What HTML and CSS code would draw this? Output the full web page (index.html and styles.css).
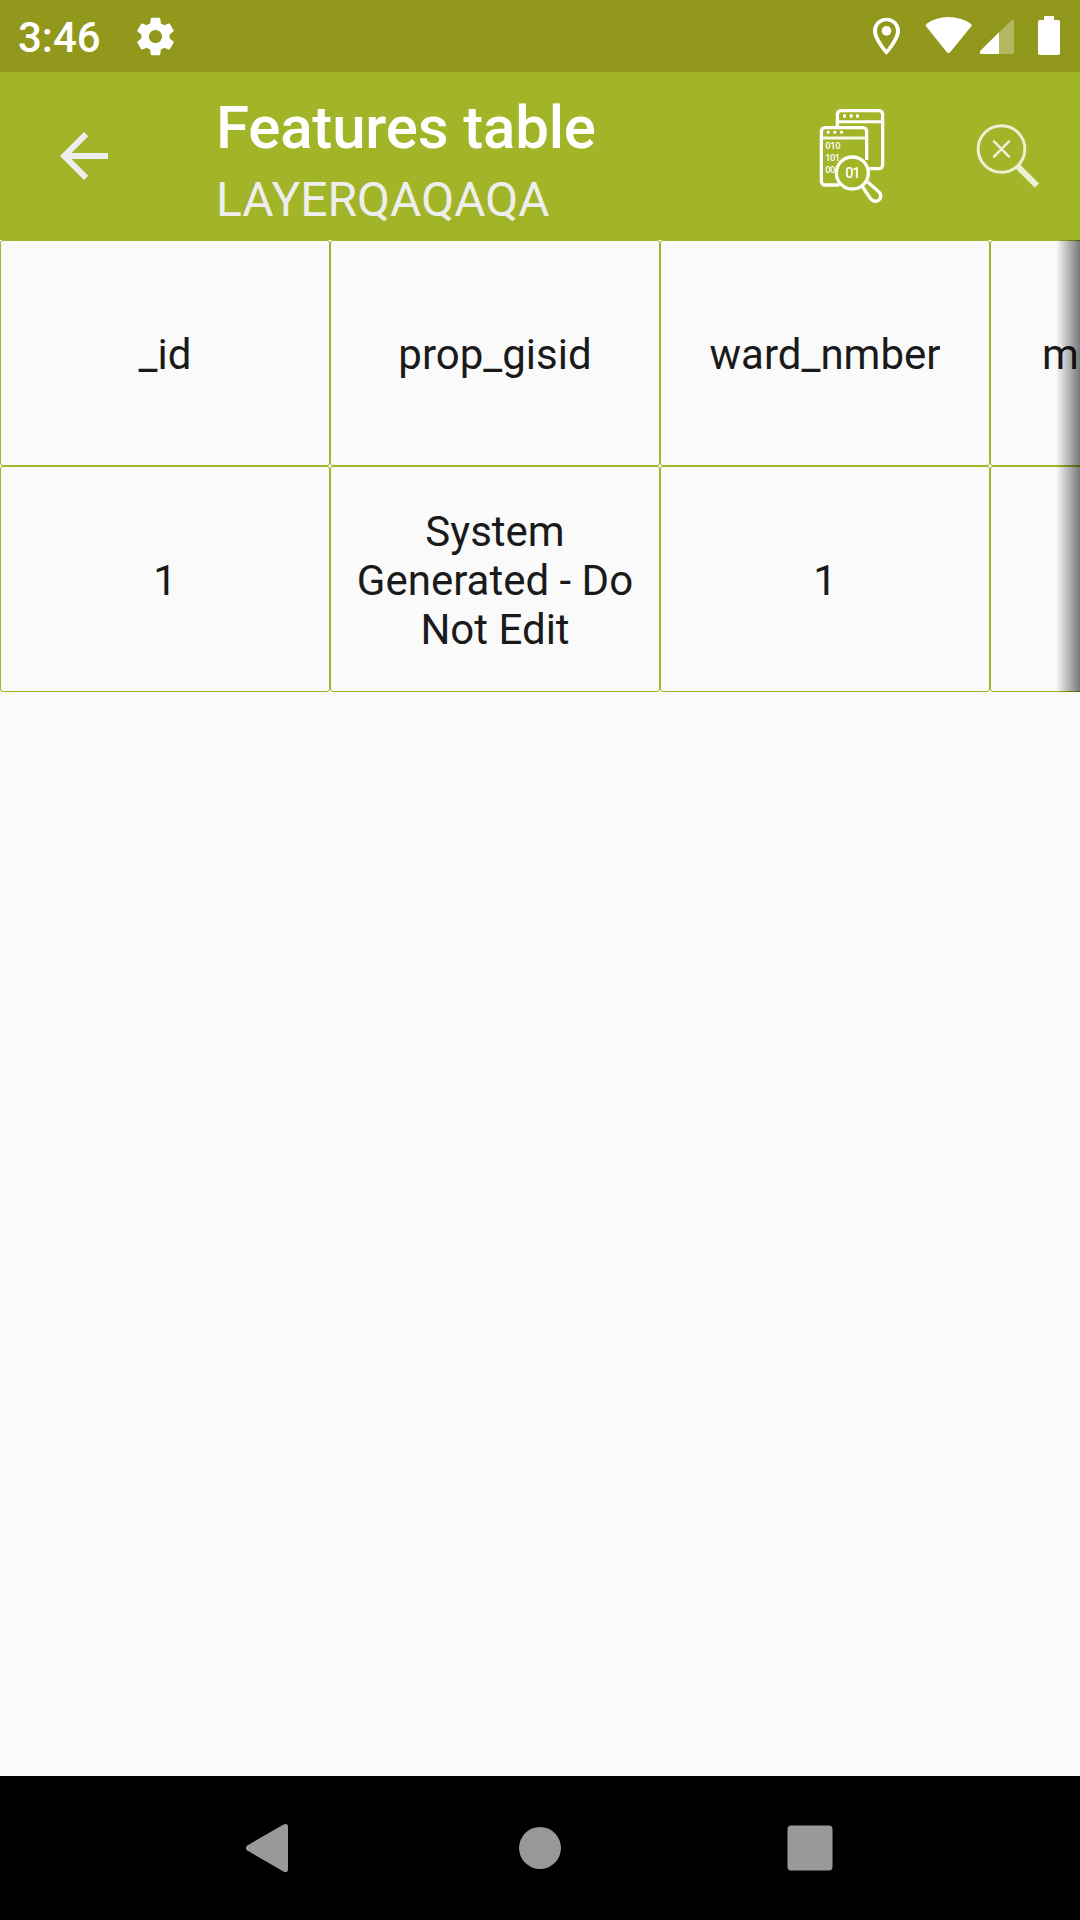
FILE: index.html
```html
<!DOCTYPE html>
<html lang="en">
<head>
<meta charset="utf-8">
<title>Features table</title>
<link rel="stylesheet" href="styles.css">
</head>
<body>
<div class="screen">
  <div class="status-bar">
    <span class="clock">3:46</span>
    <svg class="gear" width="45" height="45" viewBox="0 0 24 24"><path fill="#fff" d="M19.43 12.98c.04-.32.07-.64.07-.98s-.03-.66-.07-.98l2.11-1.65c.19-.15.24-.42.12-.64l-2-3.46c-.12-.22-.39-.3-.61-.22l-2.49 1c-.52-.4-1.08-.73-1.69-.98l-.38-2.65C14.46 2.18 14.25 2 14 2h-4c-.25 0-.46.18-.49.42l-.38 2.65c-.61.25-1.17.59-1.69.98l-2.49-1c-.23-.09-.49 0-.61.22l-2 3.46c-.13.22-.07.49.12.64l2.11 1.65c-.04.32-.07.65-.07.98s.03.66.07.98l-2.11 1.65c-.19.15-.24.42-.12.64l2 3.46c.12.22.39.3.61.22l2.49-1c.52.4 1.08.73 1.69.98l.38 2.65c.03.24.24.42.49.42h4c.25 0 .46-.18.49-.42l.38-2.65c.61-.25 1.17-.59 1.69-.98l2.49 1c.23.09.49 0 .61-.22l2-3.46c.12-.22.07-.49-.12-.64l-2.11-1.65zM12 15.5c-1.93 0-3.5-1.57-3.5-3.5s1.57-3.5 3.5-3.5 3.5 1.57 3.5 3.5-1.57 3.5-3.5 3.5z"/></svg>
    <div class="status-icons">
      <svg class="location" width="27" height="72" viewBox="99 0 81 216"><path fill="#fff" fill-rule="evenodd" d="M139.500 53C117 53 99 70 99 93C99 122 139.500 165 139.500 165S180 122 180 93C180 70 162 53 139.500 53ZM139.500 64C156 64 168 77 168 93C168 108 154 130 139.500 149C125 130 111 108 111 93C111 77 123 64 139.500 64Z"/><circle cx="139.500" cy="92.500" r="14.500" fill="#fff"/></svg>
      <svg class="wifi" width="47" height="72" viewBox="255 0 141 216"><path fill="#fff" d="M260 71Q289 51 325.500 51T392 71Q397 75 394 79L331 156Q325.500 162 320 156L258 79Q256 74 260 71Z"/></svg>
      <svg class="signal" width="36" height="72" viewBox="417 0 108 216"><path fill="#fff" fill-opacity=".3" d="M477 97L513 62Q522 55 522 64V156Q522 162 516 162H477Z"/><path fill="#fff" d="M477 97V162H424Q417 160 421 152Z"/></svg>
      <svg class="battery" width="24" height="72" viewBox="591 0 72 216"><path fill="#fff" d="M612 48H642V60H655Q660 60 660 66V159Q660 165 654 165H600Q594 165 594 159V66Q594 60 600 60H612Z"/></svg>
    </div>
  </div>

  <header class="toolbar">
    <svg class="back" width="72" height="72" viewBox="0 0 24 24"><path fill="#eee" d="M20 11H7.830l5.590-5.590L12 4l-8 8 8 8 1.410-1.410L7.830 13H20z"/></svg>
    <div class="titles">
      <h1 class="title">Features table</h1>
      <div class="subtitle">LAYERQAQAQA</div>
    </div>
    <div class="actions">
      <svg width="140" height="140" viewBox="0 0 420 420">
        <g fill="none" stroke="#fff" stroke-width="10" stroke-linejoin="round">
          <path d="M172 140V105Q172 92 185 92H295Q308 92 308 105V253Q308 266 295 266H268"/>
          <path d="M172 125H308" stroke-width="9"/>
          <path d="M178 315H137Q124 315 124 302V156Q124 143 137 143H247Q260 143 260 156V240"/>
          <path d="M124 174H260" stroke-width="9" stroke-opacity=".9"/>
          <circle cx="217" cy="279" r="48"/>
          <path d="M246 318L271 355Q281 368 294 362Q306 354 300 340Q298 336 263 306"/>
        </g>
        <g fill="#fff">
          <rect x="189" y="103" width="9" height="10" rx="3"/><rect x="209" y="103" width="9" height="10" rx="3"/><rect x="228" y="103" width="9" height="10" rx="3"/>
          <rect x="140" y="152" width="9" height="9" rx="3"/><rect x="160" y="152" width="9" height="9" rx="3"/><rect x="180" y="152" width="9" height="9" rx="3"/>
        </g>
        <g class="digits">
          <text x="136" y="208" textLength="46">010</text>
          <text x="136" y="243" textLength="44">101</text>
          <text x="136" y="278" textLength="30">00</text>
          <text class="digits-big" x="196" y="294" textLength="46">01</text>
        </g>
      </svg>
      <svg width="140" height="140" viewBox="0 0 420 420">
        <g fill="none" stroke="#ecf0d5">
          <circle cx="184.500" cy="207" r="70" stroke-width="9"/>
          <path d="M162 184L207 230M207 184L162 230" stroke-width="8" stroke-linecap="round"/>
          <path d="M233 259L291 317" stroke-width="18"/>
        </g>
      </svg>
    </div>
  </header>

  <main class="table-area">
    <div class="table">
      <div class="cell">_id</div>
      <div class="cell">prop_gisid</div>
      <div class="cell">ward_nmber</div>
      <div class="cell cell-cut">m</div>
      <div class="cell">1</div>
      <div class="cell">System Generated - Do Not Edit</div>
      <div class="cell">1</div>
      <div class="cell"></div>
    </div>
    <div class="edge-shadow"></div>
  </main>

  <nav class="nav-bar">
    <svg width="48" height="54" viewBox="0 0 48 54"><path fill="#999" d="M1.300 24.500L37.500 3.500Q42 1.500 42 6V48Q42 52.500 37.500 50.500L1.300 29.500Q-1.500 27 1.300 24.500Z"/></svg>
    <svg width="48" height="54" viewBox="0 0 48 54"><circle cx="24" cy="27" r="21" fill="#999"/></svg>
    <svg width="48" height="54" viewBox="0 0 48 54"><rect x="1.500" y="4.500" width="45" height="45" rx="3.500" fill="#999"/></svg>
  </nav>
</div>
</body>
</html>
```

FILE: styles.css
```css
* { box-sizing: border-box; }

body {
  margin: 0;
  font-family: Roboto, "Liberation Sans", sans-serif;
}

svg { display: block; flex: none; }

.screen {
  width: 1080px;
  height: 1920px;
  display: flex;
  flex-direction: column;
  overflow: hidden;
  background: #fafafa;
}

.status-bar {
  height: 72px;
  flex: none;
  display: flex;
  align-items: center;
  padding: 0 19px 0 18px;
  background: #92981b;
  color: #fff;
}

.clock {
  width: 114.5px;
  font-size: 42px;
  font-weight: 500;
  line-height: 50px;
  padding-top: 4px;
}

.status-icons {
  display: flex;
  margin-left: auto;
}

.wifi { margin-left: 25px; }
.signal { margin-left: 7px; }
.battery { margin-left: 22px; }

.toolbar {
  height: 168px;
  flex: none;
  display: flex;
  align-items: center;
  padding-left: 48px;
  background: #a2b427;
}

.titles {
  margin-left: 96px;
  padding-top: 9px;
}

.title {
  margin: 0;
  font-size: 60px;
  font-weight: 500;
  line-height: 70px;
  letter-spacing: -0.18px;
  color: #fff;
}

.subtitle {
  margin-top: 9px;
  font-size: 48px;
  line-height: 56px;
  color: #eee;
}

.actions {
  display: flex;
  gap: 20px;
  margin-left: auto;
  padding-bottom: 12px;
}

.digits {
  fill: #fff;
  font-size: 28px;
  font-weight: 500;
}

.digits-big {
  font-size: 44px;
}

.table-area {
  position: relative;
  flex: 1;
  overflow: hidden;
}

.table {
  width: 1320px;
  display: grid;
  grid-template-columns: repeat(4, 330px);
  grid-auto-rows: 226px;
}

.cell {
  display: flex;
  align-items: center;
  justify-content: center;
  padding: 2px 20px 0;
  border: 1px solid #a2b427;
  border-radius: 3px;
  font-size: 42px;
  line-height: 49px;
  text-align: center;
  color: #1a1a1a;
}

.cell-cut {
  justify-content: flex-start;
  padding-left: 51px;
}

.edge-shadow {
  position: absolute;
  top: 0;
  right: 0;
  width: 24px;
  height: 452px;
  background: linear-gradient(to right, rgba(0, 0, 0, 0), rgba(0, 0, 0, 0.52));
}

.nav-bar {
  height: 144px;
  flex: none;
  display: flex;
  align-items: center;
  justify-content: center;
  gap: 222px;
  background: #000;
}
```
